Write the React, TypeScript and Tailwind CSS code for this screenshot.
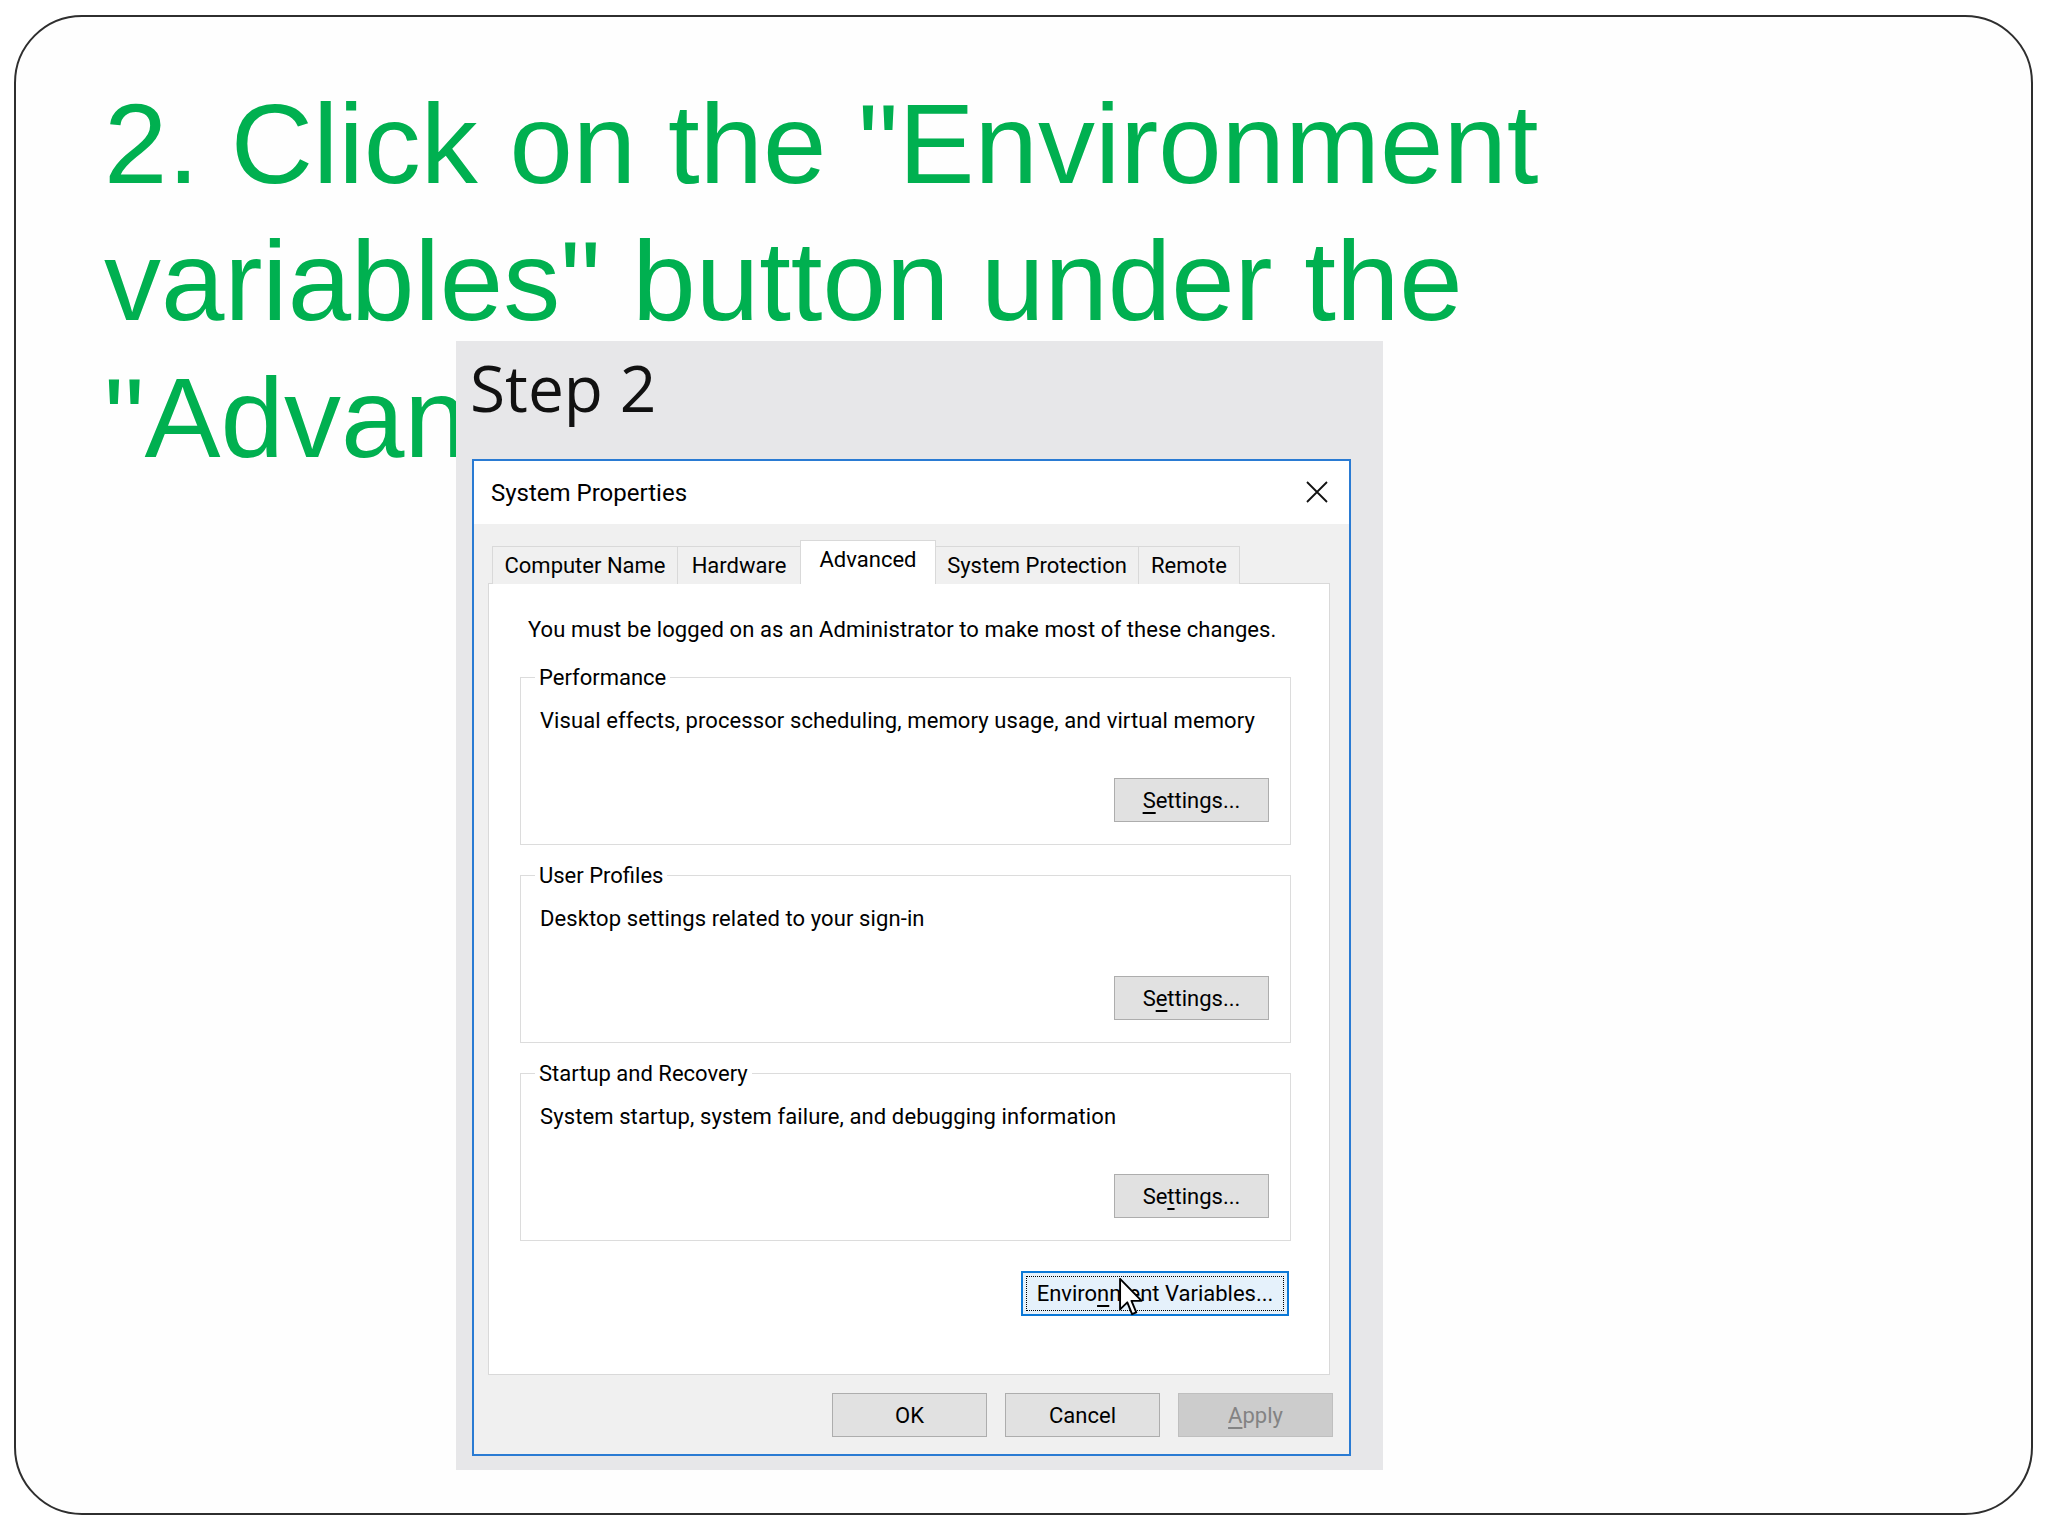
import React from "react";

const ui = 'font-["Roboto","Liberation_Sans",sans-serif] text-black';

export default function App() {
  return (
    <div className="w-[2048px] h-[1536px] bg-white overflow-hidden pt-[15px] pl-[14px]">
      {/* slide frame */}
      <div className="relative w-[2019px] h-[1500px] border-2 border-[#2e2e2e] rounded-[68px] bg-[#fefefe]">
        <h1 className='w-[1700px] pl-[88px] pt-[58px] font-["Liberation_Sans",Arial,sans-serif] text-[114px] leading-[137px] text-[#00b050] font-normal'>
          2. Click on the "Environment variables" button under the "Advanced" tab
        </h1>

        {/* pasted screenshot, lies over the title */}
        <div className="absolute left-[440px] top-[324px] w-[927px] h-[1129px] bg-[#e7e7e9] pl-[16px] flex flex-col">
          <div className='h-[118px] pt-[15px] font-["Open_Sans",sans-serif] text-[64px] leading-none text-[#111] -ml-[2px]'>
            Step 2
          </div>
          <Dialog />
        </div>
      </div>
    </div>
  );
}

function Dialog() {
  return (
    <div className={`w-[879px] h-[997px] border-2 border-[#2a7bd3] bg-[#f0f0f0] flex flex-col ${ui}`}>
      <div className="h-[63px] bg-white flex items-center justify-between pl-[17px] pr-[20px]">
        <span className="text-[24px]">System Properties</span>
        <svg width="24" height="24" viewBox="0 0 24 24" className="mt-[-2px]">
          <path d="M2 2 L22 22 M22 2 L2 22" stroke="#111" strokeWidth="1.8" fill="none" />
        </svg>
      </div>

      <div className="flex-1 flex flex-col pl-[14px] pr-[19px] pt-[16px]">
        <div className="flex items-end pl-[4px] h-[44px] -mb-px relative z-10 text-[22px]">
          <Tab label="Computer Name" w="w-[186px]" />
          <Tab label="Hardware" w="w-[124px]" />
          <Tab label="Advanced" w="w-[136px]" active />
          <Tab label="System Protection" w="w-[204px]" />
          <Tab label="Remote" w="w-[102px]" />
        </div>

        <div className="h-[792px] border border-[#d9d9d9] bg-white pl-[31px] pr-[38px] pt-[33px] flex flex-col text-[22px]">
          <p className="pl-[8px] leading-[26px] tracking-[0.1px]">
            You must be logged on as an Administrator to make most of these changes.
          </p>
          <div className="mt-[34px] flex flex-col gap-[30px]">
            <Group label="Performance" desc="Visual effects, processor scheduling, memory usage, and virtual memory" keyIndex={0} />
            <Group label="User Profiles" desc="Desktop settings related to your sign-in" keyIndex={1} />
            <Group label="Startup and Recovery" desc="System startup, system failure, and debugging information" keyIndex={2} />
          </div>

          <div className="mt-[30px] self-end mr-[2px] relative w-[268px] h-[45px] border-2 border-[#0a78d7] bg-[#e5f1fb] p-[3px]">
            <div className="h-full border border-dotted border-black flex items-center justify-center">
              <span>
                Enviro<span className="underline underline-offset-4">n</span>ment Variables...
              </span>
            </div>
            <svg width="25" height="40" viewBox="0 0 13 21" className="absolute left-[96px] top-[5px]">
              <path d="M0.5 0.5 L0.5 16.5 L4.3 12.8 L6.8 19 L9 18 L6.5 12 L11.8 12 Z" fill="#fff" stroke="#000" strokeWidth="1" strokeLinejoin="round" />
            </svg>
          </div>
        </div>

        <div className="mt-[18px] -mr-[3px] flex justify-end gap-[18px] text-[22px]">
          <Btn>OK</Btn>
          <Btn>Cancel</Btn>
          <div className="w-[155px] h-[44px] border border-[#bfbfbf] bg-[#cccccc] flex items-center justify-center text-[#838383]">
            <span>
              <span className="underline underline-offset-4">A</span>pply
            </span>
          </div>
        </div>
      </div>
    </div>
  );
}

function Tab({ label, w, active }: { label: string; w: string; active?: boolean }) {
  return (
    <div
      className={`${w} -ml-px first:ml-0 border border-b-0 border-[#d9d9d9] flex items-center justify-center ${
        active ? "h-[44px] bg-white relative z-10 pb-[6px]" : "h-[38px] bg-[#f0f0f0] border-b border-b-[#d9d9d9]"
      }`}
    >
      {label}
    </div>
  );
}

function Group({ label, desc, keyIndex }: { label: string; desc: string; keyIndex: number }) {
  const word = "Settings...";
  return (
    <div className="relative h-[168px] border border-[#dcdcdc] flex flex-col">
      <span className="absolute left-[14px] -top-[13px] px-[4px] bg-white leading-[26px]">{label}</span>
      <p className="pl-[19px] pt-[30px] leading-[26px] tracking-[0.1px]">{desc}</p>
      <Btn className="mt-auto ml-auto mr-[21px] mb-[22px] w-[154px]">
        {word.slice(0, keyIndex)}
        <span className="underline underline-offset-4">{word[keyIndex]}</span>
        {word.slice(keyIndex + 1)}
      </Btn>
    </div>
  );
}

function Btn({ children, className = "" }: { children: React.ReactNode; className?: string }) {
  return (
    <div className={`w-[155px] h-[44px] border border-[#adadad] bg-[#e1e1e1] flex items-center justify-center ${className}`}>
      <span>{children}</span>
    </div>
  );
}
